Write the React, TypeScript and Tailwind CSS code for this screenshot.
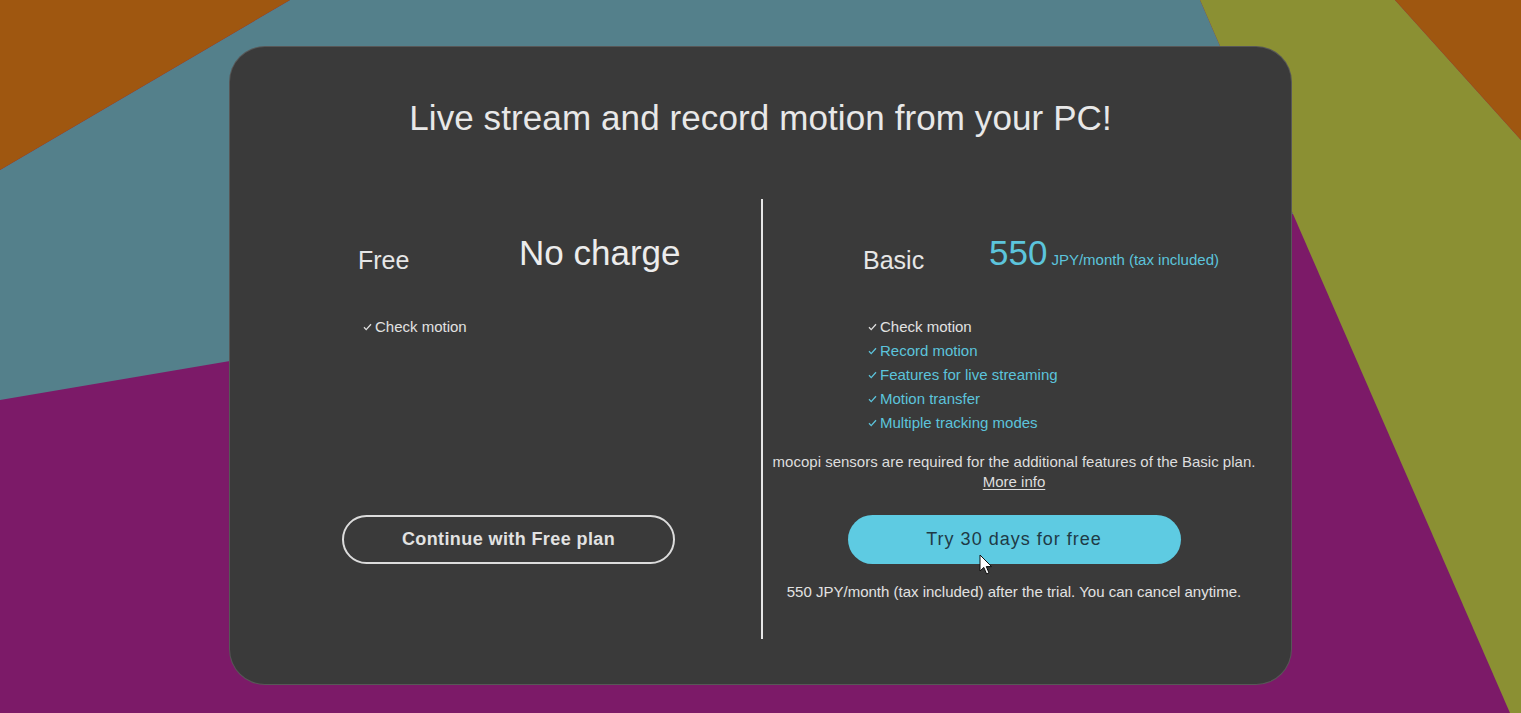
import React from 'react';

const font = { fontFamily: '"Liberation Sans", Arial, sans-serif' };

const Backdrop: React.FC = () => (
  <svg
    className="absolute inset-0 h-full w-full"
    viewBox="0 0 1521 713"
    preserveAspectRatio="none"
  >
    <rect width="1521" height="713" fill="#7c1a68" />
    <polygon points="290,0 1200,0 1293,214 230,361 0,400 0,170" fill="#54808b" />
    <polygon points="0,0 290,0 0,170" fill="#9f5710" />
    <polygon points="1200,0 1395,0 1521,140 1521,713 1510,713 1293,214" fill="#8b9033" />
    <polygon points="1395,0 1521,0 1521,140" fill="#9f5710" />
  </svg>
);

const CheckMark: React.FC<{ color: string }> = ({ color }) => (
  <svg width="9" height="8" viewBox="0 0 9 8" className="shrink-0">
    <path d="M1 4.3 L3.2 6.6 L8 1.2" fill="none" stroke={color} strokeWidth="1.3" />
  </svg>
);

const Feature: React.FC<{ label: string; accent?: boolean }> = ({ label, accent }) => (
  <li className="flex h-[24px] items-center gap-[3px]">
    <CheckMark color={accent ? '#5cc4dc' : '#e0e0e0'} />
    <span className={accent ? 'text-[#5cc4dc]' : 'text-[#e2e2e2]'}>{label}</span>
  </li>
);

const Cursor: React.FC = () => (
  <svg
    className="absolute left-[131px] top-[39px]"
    width="14"
    height="22"
    viewBox="0 0 14 22"
  >
    <path
      d="M1 1 L1 17 L4.8 13.4 L7.6 20 L10 19 L7.3 12.6 L12.6 12.6 Z"
      fill="#fff"
      stroke="#111"
      strokeWidth="1"
      strokeLinejoin="round"
    />
  </svg>
);

export default function App() {
  return (
    <div className="relative h-[713px] w-full overflow-hidden" style={font}>
      <Backdrop />
      <div className="relative pt-[46px]">
        <div className="mx-auto flex h-[639px] w-[1063px] flex-col rounded-[36px] border border-white/15 bg-[#3a3a3a] px-[26px] pt-[50px]">
          <h1 className="text-center text-[35px] leading-[42px] tracking-[0.1px] text-[#e8e8e8]">
            Live stream and record motion from your PC!
          </h1>

          <div className="mt-[60px] flex h-[440px]">
            {/* Free plan */}
            <div className="flex w-[505px] flex-col">
              <div className="mt-[33px] flex items-end pl-[102px]">
                <span className="w-[161px] text-[25px] leading-[28px] text-[#e6e6e6]">Free</span>
                <span className="text-[35px] leading-[42px] text-[#ececec]">No charge</span>
              </div>
              <ul className="mt-[41px] pl-[107px] text-[15px]">
                <Feature label="Check motion" />
              </ul>
              <button className="mx-auto mt-[176px] h-[49px] w-[333px] rounded-full border-2 border-[#dcdcdc] text-[18px] font-bold tracking-[0.4px] text-[#e2e2e2]">
                Continue with Free plan
              </button>
            </div>

            <div className="w-[2px] bg-[#e6e6e6]" />

            {/* Basic plan */}
            <div className="flex flex-1 flex-col">
              <div className="mt-[33px] flex items-end pl-[100px]">
                <span className="w-[126px] text-[25px] leading-[28px] text-[#e6e6e6]">Basic</span>
                <div className="flex items-baseline gap-[4px] text-[#5cc4dc]">
                  <span className="text-[35px] leading-[42px]">550</span>
                  <span className="text-[15px]">JPY/month (tax included)</span>
                </div>
              </div>
              <ul className="mt-[41px] pl-[105px] text-[15px]">
                <Feature label="Check motion" />
                <Feature label="Record motion" accent />
                <Feature label="Features for live streaming" accent />
                <Feature label="Motion transfer" accent />
                <Feature label="Multiple tracking modes" accent />
              </ul>
              <p className="mt-[17px] text-center text-[15px] leading-[20px] text-[#dedede]">
                mocopi sensors are required for the additional features of the Basic plan.
                <br />
                <a className="underline underline-offset-2">More info</a>
              </p>
              <div className="relative mx-auto mt-[23px]">
                <button className="h-[49px] w-[333px] rounded-full bg-[#5ecbe2] text-[18px] tracking-[1px] text-[#1e3a46]">
                  Try 30 days for free
                </button>
                <Cursor />
              </div>
              <p className="mt-[18px] text-center text-[15px] leading-[20px] text-[#e2e2e2]">
                550 JPY/month (tax included) after the trial. You can cancel anytime.
              </p>
            </div>
          </div>
        </div>
      </div>
    </div>
  );
}
